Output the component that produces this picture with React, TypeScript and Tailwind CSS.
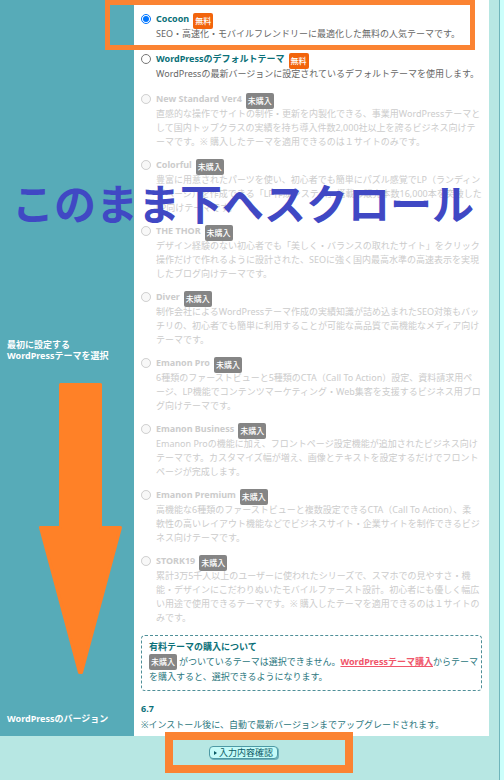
import React, { useState } from 'react';

type Theme = {
  name: string;
  free?: boolean;
  lines: string[];
};

const themes: Theme[] = [
  {
    name: 'Cocoon',
    free: true,
    lines: ['SEO・高速化・モバイルフレンドリーに最適化した無料の人気テーマです。'],
  },
  {
    name: 'WordPressのデフォルトテーマ',
    free: true,
    lines: ['WordPressの最新バージョンに設定されているデフォルトテーマを使用します。'],
  },
  {
    name: 'New Standard Ver4',
    lines: [
      '直感的な操作でサイトの制作・更新を内製化できる、事業用WordPressテーマと',
      'して国内トップクラスの実績を持ち導入件数2,000社以上を誇るビジネス向けテ',
      'ーマです。※ 購入したテーマを適用できるのは１サイトのみです。',
    ],
  },
  {
    name: 'Colorful',
    lines: [
      '豊富に用意されたパーツを使い、初心者でも簡単にパズル感覚でLP（ランディン',
      'グページ）を作成できる「LP作成システム」搭載の販売本数16,000本を突破した',
      'LP向けテーマです。',
    ],
  },
  {
    name: 'THE THOR',
    lines: [
      'デザイン経験のない初心者でも「美しく・バランスの取れたサイト」をクリック',
      '操作だけで作れるように設計された、SEOに強く国内最高水準の高速表示を実現',
      'したブログ向けテーマです。',
    ],
  },
  {
    name: 'Diver',
    lines: [
      '制作会社によるWordPressテーマ作成の実績知識が詰め込まれたSEO対策もバッ',
      'チリの、初心者でも簡単に利用することが可能な高品質で高機能なメディア向け',
      'テーマです。',
    ],
  },
  {
    name: 'Emanon Pro',
    lines: [
      '6種類のファーストビューと5種類のCTA（Call To Action）設定、資料請求用ペ',
      'ージ、LP機能でコンテンツマーケティング・Web集客を支援するビジネス用ブロ',
      'グ向けテーマです。',
    ],
  },
  {
    name: 'Emanon Business',
    lines: [
      'Emanon Proの機能に加え、フロントページ設定機能が追加されたビジネス向け',
      'テーマです。カスタマイズ幅が増え、画像とテキストを設定するだけでフロント',
      'ページが完成します。',
    ],
  },
  {
    name: 'Emanon Premium',
    lines: [
      '高機能な6種類のファーストビューと複数設定できるCTA（Call To Action）、柔',
      '軟性の高いレイアウト機能などでビジネスサイト・企業サイトを制作できるビジ',
      'ネス向けテーマです。',
    ],
  },
  {
    name: 'STORK19',
    lines: [
      '累計3万5千人以上のユーザーに使われたシリーズで、スマホでの見やすさ・機',
      '能・デザインにこだわりぬいたモバイルファースト設計。初心者にも優しく幅広',
      'い用途で使用できるテーマです。※ 購入したテーマを適用できるのは１サイトの',
      'みです。',
    ],
  },
];

function Badge({ free }: { free?: boolean }) {
  return (
    <span
      className={`inline-flex h-4 shrink-0 items-center rounded-xs px-[2px] text-[8px] leading-none font-medium text-white ${
        free ? 'bg-[#f2640c]' : 'bg-[#858585]'
      }`}
    >
      {free ? '無料' : '未購入'}
    </span>
  );
}

export default function App() {
  const [selected, setSelected] = useState('Cocoon');

  return (
    <div className="min-h-screen bg-[#ccfffb] pr-1 font-['Noto_Sans','Noto_Sans_CJK_JP',sans-serif] text-[9px]">
      <div className="relative min-h-screen overflow-hidden border-r border-[#6fb5bb] bg-[#b7e7e3]">
        <div className="mr-[10px] grid grid-cols-[134px_minmax(0,1fr)] bg-white">
          <div className="flex items-center bg-[#57abb8] pl-[7px] leading-[11px] font-bold text-white">
            <span>
              最初に設定する
              <br />
              WordPressテーマを選択
            </span>
          </div>

          <div className="px-[7px] pt-[10px] pb-[9px]">
            {themes.map((theme) => (
              <div key={theme.name} className={theme.free ? 'mb-[9px]' : 'mb-[7px]'}>
                <label className="flex h-[17px] items-start">
                  <input
                    type="radio"
                    name="theme"
                    checked={selected === theme.name}
                    disabled={!theme.free}
                    onChange={() => setSelected(theme.name)}
                    className="mt-1 mr-[5px] size-[10px] shrink-0"
                  />
                  <span
                    className={`mr-1 leading-[17px] font-bold whitespace-nowrap ${
                      theme.free ? 'text-[#0b7078]' : 'text-[#cccccc]'
                    }`}
                  >
                    {theme.name}
                  </span>
                  <span className="mt-[3px] flex">
                    <Badge free={theme.free} />
                  </span>
                </label>
                <p className={`pl-[15px] leading-[14px] whitespace-nowrap ${theme.free ? 'text-[#666666]' : 'text-[#cccccc]'}`}>
                  {theme.lines.map((line) => (
                    <span key={line} className="block">
                      {line}
                    </span>
                  ))}
                </p>
              </div>
            ))}

            <div className="mt-[10px] rounded-sm border border-dashed border-[#4f8f98] px-[7px] pt-1 pb-[6px] leading-[14px] text-[#2b7780]">
              <p className="font-bold text-[#0b7078]">有料テーマの購入について</p>
              <p className="flex items-center whitespace-nowrap">
                <Badge />
                <span className="ml-[2px]">
                  がついているテーマは選択できません。
                  <a href="#" className="font-bold text-[#f0566a] underline">
                    WordPressテーマ購入
                  </a>
                  からテーマ
                </span>
              </p>
              <p>を購入すると、選択できるようになります。</p>
            </div>
          </div>

          <div className="flex items-center bg-[#57abb8] pl-[7px] leading-[11px] font-bold text-white">WordPressのバージョン</div>
          <div className="pt-[2px] pb-1 pl-[7px] leading-[14px] text-[#2b7780]">
            <p className="mb-[2px] font-bold text-[#0b7078]">6.7</p>
            <p>※インストール後に、自動で最新バージョンまでアップグレードされます。</p>
          </div>
        </div>

        <div className="flex justify-center pt-[10px] pr-[12px]">
          <button
            type="button"
            className="flex h-[13px] items-center rounded-[4px] border border-[#4d9aa5] bg-[#c5fbf8] px-1 text-[9px] leading-none text-[#0b5c66] shadow-[1px_1px_0_#6fb0b9]"
          >
            <svg viewBox="0 0 3 4" className="mr-[2px] h-1 w-[3px]" fill="currentColor">
              <path d="M0 0l3 2-3 2z" />
            </svg>
            入力内容確認
          </button>
        </div>

        {/* guide marks drawn over the form */}
        <div className="pointer-events-none absolute top-0 left-[105px] h-[50px] w-[370px] border-[5px] border-[#fb8332]" />
        <p className="pointer-events-none absolute top-[172px] left-[12px] font-['Noto_Sans_CJK_JP',sans-serif] text-[42px] leading-[60px] font-bold whitespace-nowrap text-[#4048c4]">
          このまま下へスクロール
        </p>
        <svg
          viewBox="0 0 84 294"
          className="pointer-events-none absolute top-[382px] left-[39px] h-[294px] w-[84px]"
          fill="#ff8127"
          stroke="#ff8127"
          strokeWidth="3"
          strokeLinejoin="round"
        >
          <path d="M21.500 2.500H61.500V145.500H81.500L42.500 290.500H40.500L1.500 145.500H21.500Z" />
        </svg>
        <div className="pointer-events-none absolute top-[732px] left-[165px] h-[41px] w-[188px] border-8 border-[#fb8332]" />
      </div>
    </div>
  );
}
